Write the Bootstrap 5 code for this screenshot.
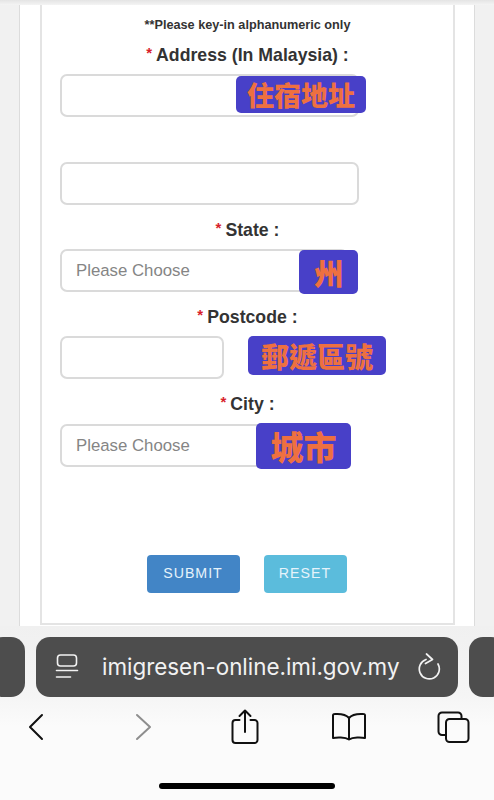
<!doctype html>
<html lang="en">
<head>
<meta charset="utf-8">
<title>Address form</title>
<link rel="stylesheet" href="https://cdn.jsdelivr.net/npm/bootstrap@5.3.0/dist/css/bootstrap.min.css">
<style>
html,body{height:800px;overflow:hidden;margin:0;background:#f2f2f2}
body{font-family:"Liberation Sans",Arial,sans-serif;color:#333}
.top-fade{height:5px;background:linear-gradient(#e4e4e4,#f4f4f4)}
.page-area{height:621px;padding:0 19px;background:#f1f1f1}
.side-panel{height:100%;background:#fff;border:solid #dcdcdc;border-width:0 1px;padding:0 19px 0 20px}
.form-box{height:620px;background:#fff;border:solid #e4e4e4;border-width:0 2px 2px 2px;padding:12px 0 0 18px;box-sizing:border-box}
.note-line{font-size:12.7px;line-height:16px;font-weight:700;text-align:center;margin:0 18px 0 0;color:#333}
.field-label{display:block;font-size:17.7px;line-height:24px;font-weight:700;text-align:center;margin:13px 18px 6px 0;color:#333}
.field-label.first{margin-top:10px}
.field-label.tall{margin-bottom:7px}
.req{color:#d81e2c;font-size:15px;margin-right:4px;position:relative;top:-3px}
.field-wrap{position:relative;width:299px;height:43px}
.field-wrap.short{width:164px}
.field-wrap.gap-top{margin-top:45px}
.field-wrap.state-wrap .field-input{width:288px}
.field-wrap.city-wrap .field-input{width:240px}
.field-input.form-control{height:43px;width:100%;border:2px solid #dadada;border-radius:7px;padding:0 14px;font-family:"Liberation Sans",Arial,sans-serif;font-size:16.8px;background:#fff;box-shadow:none}
.field-input.form-control::placeholder{color:#858585;opacity:1}
.sticker{position:absolute;display:flex;align-items:center;justify-content:center;background:#4840c8;color:#ee7040;font-family:"Noto Sans CJK TC","Noto Sans CJK SC",sans-serif;font-weight:900;border-radius:5px;line-height:1;white-space:nowrap}
.st-addr{left:176px;top:2px;width:130px;height:37px;font-size:27px}
.st-state{left:239px;top:1px;width:59px;height:44px;font-size:30px}
.st-post{left:188px;top:0;width:138px;height:39px;font-size:28px}
.st-city{left:196px;top:-1px;width:95px;height:46px;font-size:33px}
.btn-row{display:flex;gap:24px;justify-content:center;margin:88px 20px 0 0}
.act-btn.btn{height:38px;padding:0;font-size:14.2px;letter-spacing:1px;border-radius:4px;color:#e6f3fb;border:0;font-family:"Liberation Sans",Arial,sans-serif}
.act-btn.btn-primary{width:93px;background:#4285c6}
.act-btn.btn-info{width:83px;background:#5bbcdc}
.chrome{height:174px;background:linear-gradient(#f0f0f0 0,#f5f5f5 70px,#fbfbfb 100px);display:flex;flex-direction:column;overflow:hidden}
.tab-row{display:flex;gap:11px;margin:11px -11px 0 -11px;height:60px;flex:none}
.tab-stub{flex:0 0 36px;background:#4d4d4d;border-radius:14px}
.tab-main{flex:1;background:#4d4d4d;border-radius:14px;display:flex;align-items:center;padding:0 17px 0 19px;color:#f2f2f2}
.url-text{font-family:Inter,"Liberation Sans",sans-serif;font-size:22.4px;line-height:1;margin-left:23px;flex:1;white-space:nowrap}
.tool-row{display:flex;justify-content:space-between;align-items:center;padding:0 21px 0 16px;height:46px;margin-top:7px;flex:none}
.tool-item{width:40px;height:46px;display:flex;align-items:center;justify-content:center}
.tool-item.nudge{padding-left:2px}
.home-bar{width:176px;height:6px;background:#000;border-radius:3px;margin:33px auto 0 159px;flex:none}
</style>
</head>
<body>
<div class="top-fade"></div>
<div class="page-area">
  <div class="side-panel">
    <form class="form-box">
      <p class="note-line">**Please key-in alphanumeric only</p>
      <label class="field-label first"><span class="req">*</span>Address (In Malaysia) :</label>
      <div class="field-wrap">
        <input class="form-control field-input" type="text">
        <span class="sticker st-addr">住宿地址</span>
      </div>
      <div class="field-wrap gap-top"><input class="form-control field-input" type="text"></div>
      <label class="field-label"><span class="req">*</span>State :</label>
      <div class="field-wrap state-wrap">
        <input class="form-control field-input" type="text" placeholder="Please Choose">
        <span class="sticker st-state">州</span>
      </div>
      <label class="field-label"><span class="req">*</span>Postcode :</label>
      <div class="field-wrap short">
        <input class="form-control field-input" type="text">
        <span class="sticker st-post">郵遞區號</span>
      </div>
      <label class="field-label tall"><span class="req">*</span>City :</label>
      <div class="field-wrap city-wrap">
        <input class="form-control field-input" type="text" placeholder="Please Choose">
        <span class="sticker st-city">城市</span>
      </div>
      <div class="btn-row">
        <button type="button" class="btn btn-primary act-btn">SUBMIT</button>
        <button type="button" class="btn btn-info act-btn">RESET</button>
      </div>
    </form>
  </div>
</div>
<div class="chrome">
  <div class="tab-row">
    <div class="tab-stub"></div>
    <div class="tab-main">
      <svg width="24" height="28" viewBox="0 0 24 28" fill="none" stroke="#f2f2f2" stroke-width="1.6" stroke-linecap="round"><rect x="2.500" y="2" width="19" height="11" rx="3"/><path d="M1.500 17.500h21M1.500 24h14"/></svg>
      <span class="url-text">imigresen-online.imi.gov.my</span>
      <svg width="24" height="28" viewBox="0 0 24 28" fill="none" stroke="#f2f2f2" stroke-width="1.7" stroke-linecap="round" stroke-linejoin="round"><path d="M9 6.500A10 10 0 1 0 21 11"/><path d="M9.500 1 15.500 6.500 8.500 10.500"/></svg>
    </div>
    <div class="tab-stub"></div>
  </div>
  <div class="tool-row">
    <div class="tool-item"><svg width="16" height="28" viewBox="0 0 16 28" fill="none" stroke="#111" stroke-width="2" stroke-linecap="round" stroke-linejoin="round"><path d="M14 2 2 14l12 12"/></svg></div>
    <div class="tool-item nudge"><svg width="22" height="28" viewBox="0 0 22 28" fill="none" stroke="#8e8e8e" stroke-width="2" stroke-linecap="round" stroke-linejoin="round"><path d="M7 2l13 12L7 26"/></svg></div>
    <div class="tool-item"><svg width="28" height="36" viewBox="0 0 28 36" fill="none" stroke="#111" stroke-width="2" stroke-linecap="round" stroke-linejoin="round"><path d="M8.500 11H4.500a3 3 0 0 0-3 3v17a3 3 0 0 0 3 3h19a3 3 0 0 0 3-3V14a3 3 0 0 0-3-3h-4"/><path d="M14 23V2M8.500 7 14 1.500 19.500 7"/></svg></div>
    <div class="tool-item"><svg width="36" height="30" viewBox="0 0 36 30" fill="none" stroke="#111" stroke-width="2" stroke-linecap="round" stroke-linejoin="round"><path d="M18 6C15 2.500 10 1.500 3.500 2 2.500 2 2 2.700 2 3.500V26c3.500-.8 12-1.200 16 1.500 4-2.700 12.500-2.300 16-1.500V3.500c0-.8-.5-1.500-1.500-1.500C26 1.500 21 2.500 18 6Z"/><path d="M18 6v21"/></svg></div>
    <div class="tool-item"><svg width="33" height="33" viewBox="0 0 33 33" fill="none" stroke="#111" stroke-width="2" stroke-linejoin="round"><rect x="9" y="8" width="22.500" height="23" rx="3.500"/><path d="M9 24H5a3.500 3.500 0 0 1-3.500-3.500V5A3.500 3.500 0 0 1 5 1.500h16A3.500 3.500 0 0 1 24.500 5v3"/></svg></div>
  </div>
  <div class="home-bar"></div>
</div>
<script src="https://cdn.jsdelivr.net/npm/bootstrap@5.3.0/dist/js/bootstrap.bundle.min.js"></script>
</body>
</html>
